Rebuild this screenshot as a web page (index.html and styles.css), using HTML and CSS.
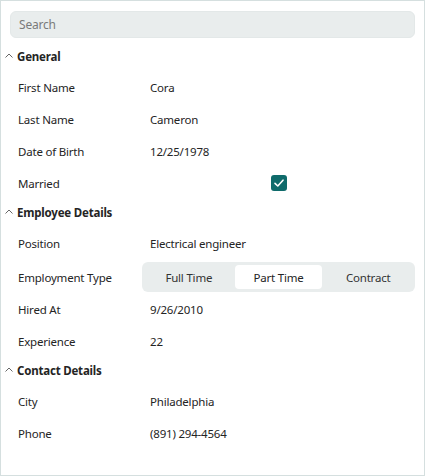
FILE: index.html
```html
<!DOCTYPE html>
<html>
<head>
<meta charset="utf-8">
<link rel="stylesheet" href="styles.css">
</head>
<body>
<div class="panel">
  <div class="search">Search</div>

  <div class="group">
    <div class="group-header"><svg class="chev" viewBox="0 0 8 5" width="8" height="5"><path d="M0.5 4.5 L4 1 L7.5 4.5" fill="none" stroke="#666" stroke-width="1"/></svg><span>General</span></div>
    <div class="row"><div class="label">First Name</div><div class="value">Cora</div></div>
    <div class="row"><div class="label">Last Name</div><div class="value">Cameron</div></div>
    <div class="row"><div class="label">Date of Birth</div><div class="value">12/25/1978</div></div>
    <div class="row"><div class="label">Married</div><div class="value center"><span class="check"><svg viewBox="0 0 16 16" width="16" height="16"><path d="M4 8.3 L6.8 11 L12 5.2" fill="none" stroke="#fff" stroke-width="1.6" stroke-linecap="round" stroke-linejoin="round"/></svg></span></div></div>
  </div>

  <div class="group">
    <div class="group-header"><svg class="chev" viewBox="0 0 8 5" width="8" height="5"><path d="M0.5 4.5 L4 1 L7.5 4.5" fill="none" stroke="#666" stroke-width="1"/></svg><span>Employee Details</span></div>
    <div class="row"><div class="label">Position</div><div class="value">Electrical engineer</div></div>
    <div class="row tall"><div class="label">Employment Type</div><div class="value seg-wrap"><div class="seg"><div class="opt">Full Time</div><div class="opt sel">Part Time</div><div class="opt">Contract</div></div></div></div>
    <div class="row"><div class="label">Hired At</div><div class="value">9/26/2010</div></div>
    <div class="row"><div class="label">Experience</div><div class="value">22</div></div>
  </div>

  <div class="group">
    <div class="group-header"><svg class="chev" viewBox="0 0 8 5" width="8" height="5"><path d="M0.5 4.5 L4 1 L7.5 4.5" fill="none" stroke="#666" stroke-width="1"/></svg><span>Contact Details</span></div>
    <div class="row"><div class="label">City</div><div class="value">Philadelphia</div></div>
    <div class="row"><div class="label">Phone</div><div class="value">(891) 294-4564</div></div>
  </div>
</div>
</body>
</html>
```
FILE: styles.css
```css
* { box-sizing: border-box; }
html, body { margin: 0; padding: 0; }
body {
  font-family: "Noto Sans", "Open Sans", sans-serif;
  font-size: 11.5px;
  letter-spacing: -0.2px;
  color: #242424;
  background: #fff;
}
.panel {
  width: 425px;
  height: 476px;
  border: 1px solid #d5dfdf;
  padding: 10px 9px 0 9px;
  display: flex;
  flex-direction: column;
}
.search {
  height: 27px;
  background: #e9eded;
  border: 1px solid #e3e8e8;
  border-radius: 6px;
  color: #7a7a7a;
  display: flex;
  align-items: center;
  padding-left: 8px;
  margin-bottom: 6px;
  font-size: 12px;
}
.group-header {
  height: 28px;
  padding-bottom: 4px;
  display: flex;
  align-items: center;
  font-weight: 700;
  margin-left: -5px;
}
.chev { margin-right: 4px; margin-top: -2px; }
.row {
  height: 32px;
  padding-bottom: 2px;
  display: flex;
  align-items: center;
}
.row.tall { height: 34px; padding-bottom: 0; }
.label { width: 132px; padding-left: 8px; }
.value { flex: 1; padding-left: 8px; }
.value.center { display: flex; justify-content: center; padding-left: 0; }
.check {
  width: 16px; height: 16px;
  border-radius: 3px;
  background: #0f6b6b;
  display: block;
}
.check svg { display: block; }
.value.seg-wrap { padding-left: 0; }
.seg {
  height: 30px;
  background: #e9eded;
  border-radius: 6px;
  display: flex;
  padding: 3px;
  gap: 2px;
}
.opt {
  flex: 1;
  display: flex;
  align-items: center;
  justify-content: center;
  border-radius: 4px;
  color: #333;
}
.opt.sel { background: #fff; color: #242424; }
```
